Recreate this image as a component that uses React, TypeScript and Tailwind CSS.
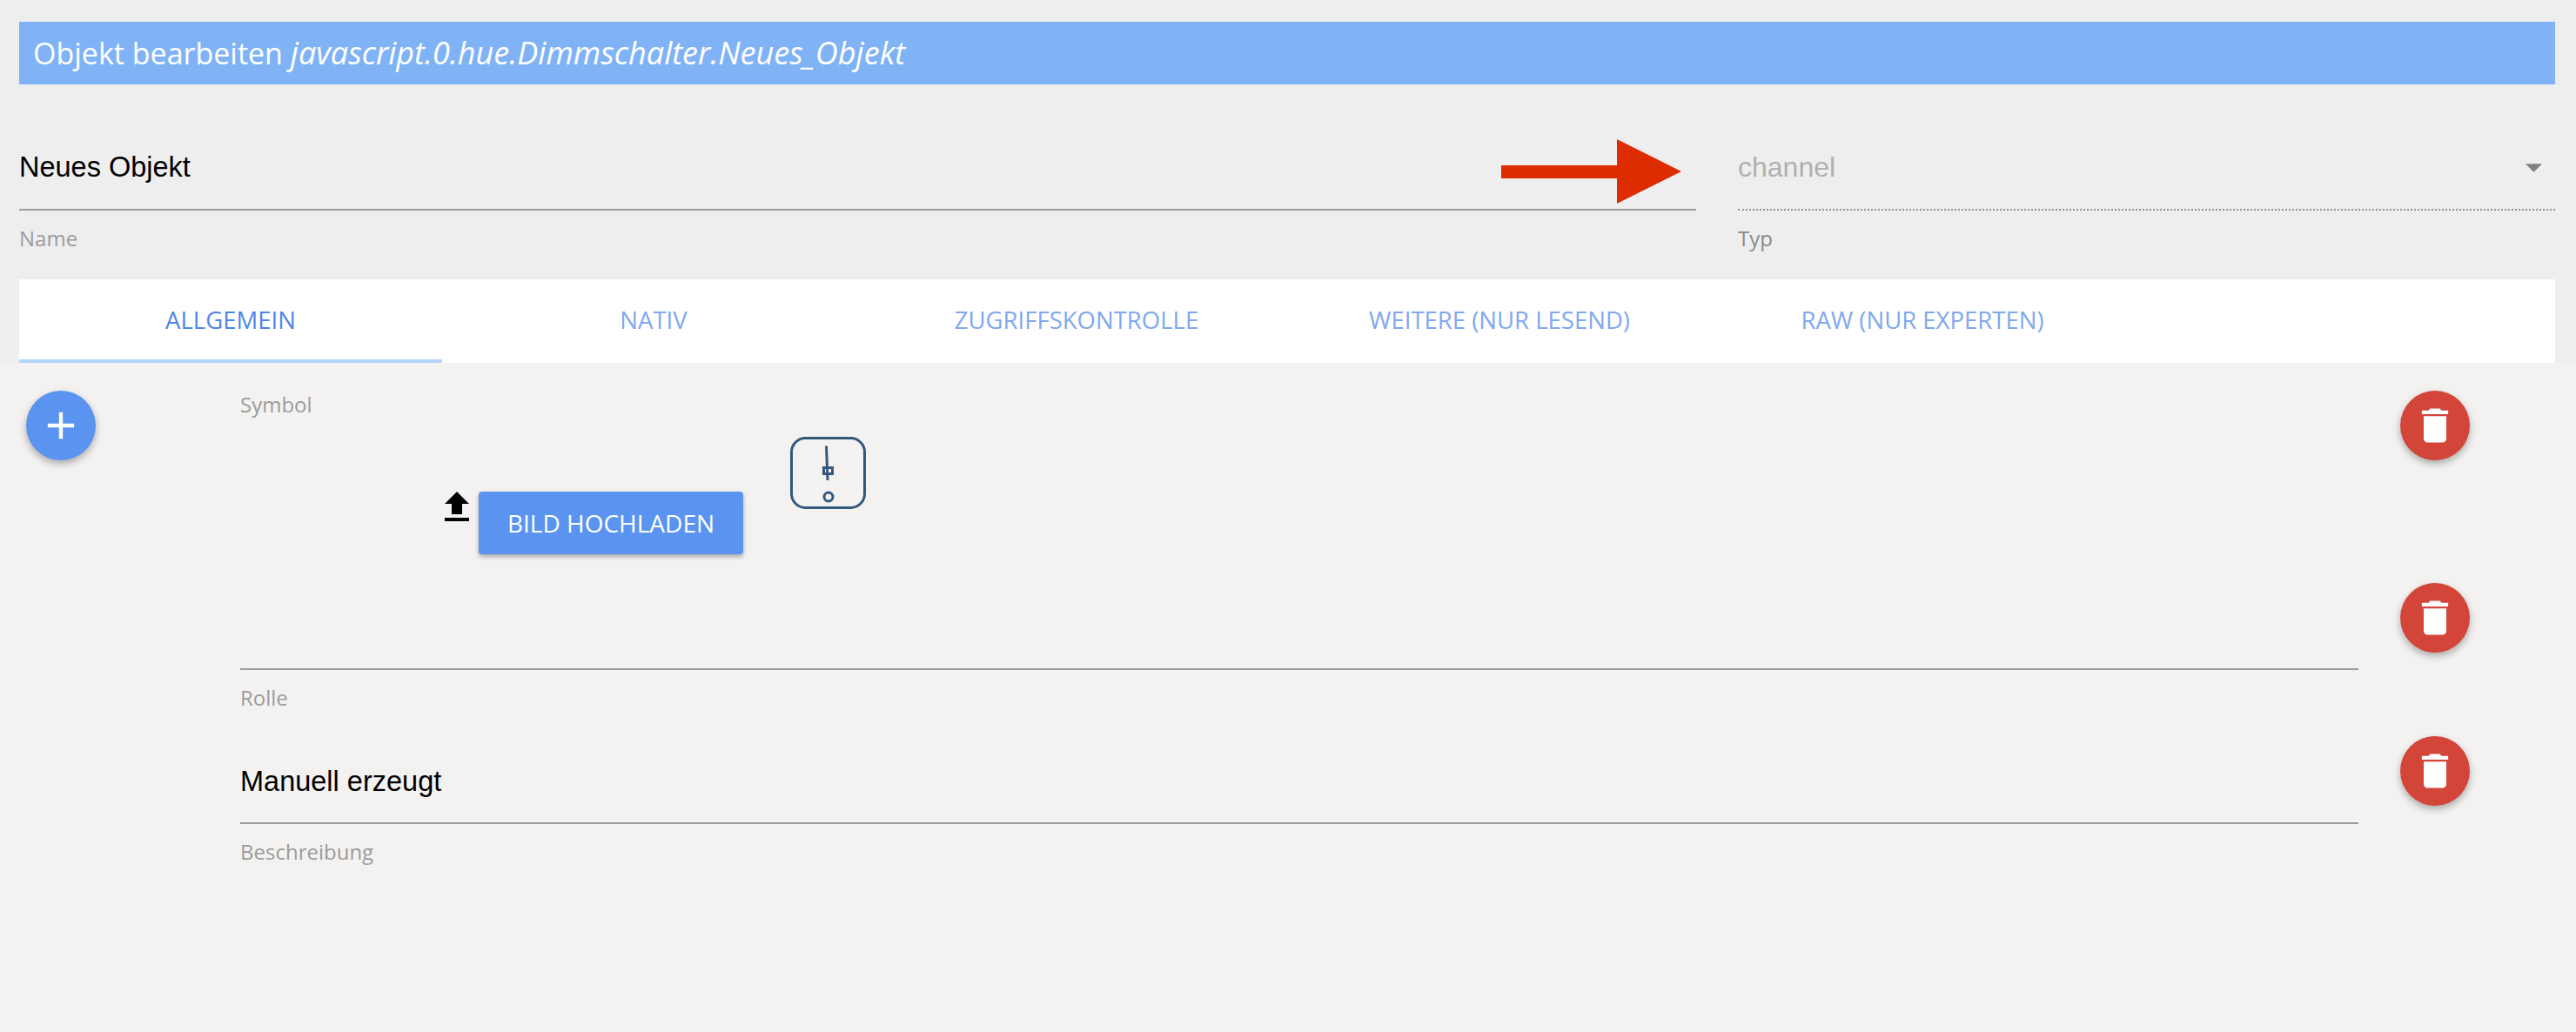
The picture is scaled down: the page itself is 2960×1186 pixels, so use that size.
import React from 'react';

const uiFont = "font-['Open_Sans','Noto_Sans',sans-serif]";
const inputFont = "font-['Liberation_Sans',Arial,sans-serif]";

function DeleteButton({ className = '' }: { className?: string }) {
  return (
    <button className={`flex h-[80px] w-[80px] items-center justify-center rounded-full bg-[#d34539] shadow-[0_4px_8px_rgba(0,0,0,0.3)] ${className}`}>
      <svg viewBox="0 0 24 24" className="h-[52px] w-[52px] fill-white">
        <path d="M6 19c0 1.1.9 2 2 2h8c1.1 0 2-.9 2-2V7H6v12zM19 4h-3.5l-1-1h-5l-1 1H5v2h14V4z" />
      </svg>
    </button>
  );
}

function Tab({ label, active }: { label: string; active?: boolean }) {
  return (
    <div
      className={`flex h-full w-[486px] items-center justify-center border-b-4 pt-[2px] text-[27.5px] ${
        active ? 'border-[#b3d4fb] text-[#4f86e8]' : 'border-transparent text-[#80a8ee]'
      }`}
    >
      {label}
    </div>
  );
}

function Label({ children, color = 'text-[#9b9b9b]' }: { children: React.ReactNode; color?: string }) {
  return <div className={`mt-[18px] text-[24px] leading-[28px] ${color}`}>{children}</div>;
}

export default function App() {
  return (
    <div className={`flex min-h-screen flex-col bg-[#f3f2f1] ${uiFont}`}>
      <div className="bg-[#eeeeee] pr-[24px] pl-[22px] pt-[25px]">
        <div className="flex h-[72px] items-center bg-[#80b3f6] pl-[16px] text-[34px] text-white">
          <span>Objekt bearbeiten&nbsp;</span>
          <i className="text-[36px]">javascript.0.hue.Dimmschalter.Neues_Objekt</i>
        </div>

        <div className="mt-[75px] flex gap-[48px]">
          <div className="w-[1927px]">
            <div className={`relative border-b-2 border-[#9b9b9b] pb-[28px] text-[32.5px] leading-[40px] text-black ${inputFont}`}>
              Neues Objekt
              <svg viewBox="0 0 207 74" className="absolute right-[17px] top-[-12px] h-[74px] w-[207px] fill-[#dd2c00]">
                <path d="M0 30h133V0l74 37-74 37V45H0z" />
              </svg>
            </div>
            <Label>Name</Label>
          </div>
          <div className="flex-1">
            <div className={`flex items-center justify-between border-b-2 border-dotted border-[#8f8f8f] pb-[28px] pr-[15px] text-[32px] leading-[40px] text-[#b0b0b0] ${inputFont}`}>
              channel
              <svg viewBox="0 0 20 10" className="mt-[2px] h-[10px] w-[19px] fill-[#808080]">
                <path d="M0 0h20L10 10z" />
              </svg>
            </div>
            <Label color="text-[#8a8a8a]">Typ</Label>
          </div>
        </div>

        <div className="mt-[33px] flex h-[96px] bg-white">
          <Tab label="ALLGEMEIN" active />
          <Tab label="NATIV" />
          <Tab label="ZUGRIFFSKONTROLLE" />
          <Tab label="WEITERE (NUR LESEND)" />
          <Tab label="RAW (NUR EXPERTEN)" />
        </div>
      </div>

      <div className="flex pl-[30px] pt-[32px]">
        <button className="flex h-[80px] w-[80px] items-center justify-center rounded-full bg-[#5a94f0] shadow-[0_4px_8px_rgba(0,0,0,0.3)]">
          <svg viewBox="0 0 24 24" className="h-[52px] w-[52px] fill-white">
            <path d="M19 13h-6v6h-2v-6H5v-2h6V5h2v6h6v2z" />
          </svg>
        </button>

        <div className="ml-[166px] w-[2434px]">
          <div className="mt-[2px] text-[24px] leading-[28px] text-[#9b9b9b]">Symbol</div>
          <div className="ml-[225px] mt-[23px] flex items-start">
            <svg viewBox="0 0 24 24" className="mt-[57px] h-[48px] w-[48px] fill-black">
              <path d="M9 16h6v-6h4l-7-7-7 7h4zm-4 2h14v2H5z" />
            </svg>
            <button className="ml-px mt-[63px] h-[72px] w-[304px] rounded-[4px] bg-[#5a94f0] text-[28px] text-white shadow-[0_3px_5px_rgba(0,0,0,0.3)]">
              BILD HOCHLADEN
            </button>
            <svg viewBox="0 0 87 83" fill="none" className="ml-[54px] h-[83px] w-[87px] stroke-[#33587a]">
              <rect x="1.500" y="1.500" width="84" height="80" rx="16" strokeWidth="3" />
              <path d="M41.500 10.500 43 50" strokeWidth="3" />
              <rect x="38.500" y="35.500" width="10" height="7" strokeWidth="3" />
              <circle cx="44" cy="69" r="5" strokeWidth="3" />
            </svg>
          </div>
          <div className="mt-[131px] h-[2px] bg-[#9b9b9b]" />
          <Label>Rolle</Label>
          <div className={`mt-[62px] border-b-2 border-[#9b9b9b] pb-[27px] text-[32.5px] leading-[40px] text-black ${inputFont}`}>
            Manuell erzeugt
          </div>
          <Label>Beschreibung</Label>
        </div>

        <div className="ml-[48px] flex flex-col">
          <DeleteButton />
          <DeleteButton className="mt-[141px]" />
          <DeleteButton className="mt-[96px]" />
        </div>
      </div>
    </div>
  );
}
